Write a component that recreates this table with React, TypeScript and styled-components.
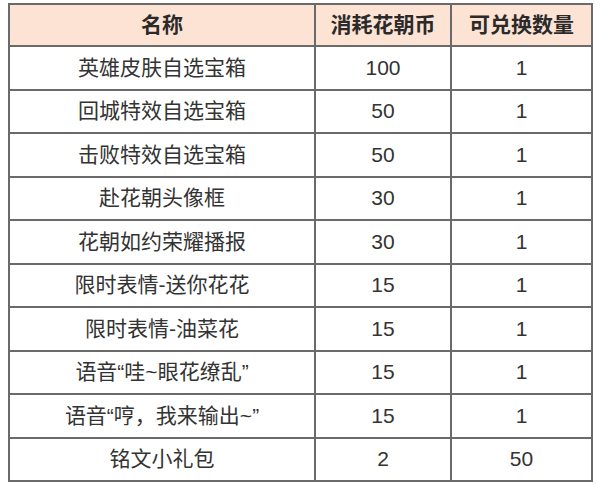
import styled, { createGlobalStyle } from "styled-components";

const GlobalStyle = createGlobalStyle`
  body {
    margin: 0;
    background: #ffffff;
    font-family: "Liberation Sans", "Noto Sans CJK SC", sans-serif;
  }
`;

const rows = [
  { name: "英雄皮肤自选宝箱", cost: "100", count: "1" },
  { name: "回城特效自选宝箱", cost: "50", count: "1" },
  { name: "击败特效自选宝箱", cost: "50", count: "1" },
  { name: "赴花朝头像框", cost: "30", count: "1" },
  { name: "花朝如约荣耀播报", cost: "30", count: "1" },
  { name: "限时表情-送你花花", cost: "15", count: "1" },
  { name: "限时表情-油菜花", cost: "15", count: "1" },
  { name: "语音“哇~眼花缭乱”", cost: "15", count: "1" },
  { name: "语音“哼，我来输出~”", cost: "15", count: "1" },
  { name: "铭文小礼包", cost: "2", count: "50" },
];

export default function App() {
  return (
    <>
      <GlobalStyle />
      <Wrapper>
        <Table>
          <colgroup>
            <col style={{ width: 306 }} />
            <col style={{ width: 136 }} />
            <col style={{ width: 141 }} />
          </colgroup>
          <thead>
            <tr>
              <Head>名称</Head>
              <Head>消耗花朝币</Head>
              <Head>可兑换数量</Head>
            </tr>
          </thead>
          <tbody>
            {rows.map((r) => (
              <tr key={r.name}>
                <Cell>{r.name}</Cell>
                <Cell>{r.cost}</Cell>
                <Cell>{r.count}</Cell>
              </tr>
            ))}
          </tbody>
        </Table>
      </Wrapper>
    </>
  );
}

const Wrapper = styled.div`
  padding: 3px 0 0 8px;
`;

const Table = styled.table`
  border-collapse: collapse;
  table-layout: fixed;
  width: 583px;
  color: #333333;
  font-size: 21px;
  line-height: 24px;
`;

const Head = styled.th`
  height: 40px;
  padding: 0;
  background: #fde3d3;
  border: 2px solid #6a6a6a;
  font-weight: bold;
  text-align: center;
  vertical-align: middle;
  color: #2a2a2a;
`;

const Cell = styled.td`
  height: 41.5px;
  padding: 0;
  border: 2px solid #6a6a6a;
  text-align: center;
  vertical-align: middle;
  white-space: nowrap;
`;
